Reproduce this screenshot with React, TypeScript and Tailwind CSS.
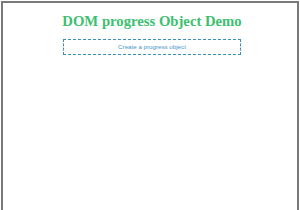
import React from 'react';

export default function App() {
  return (
    <div className="h-[210px] overflow-hidden">
      <div className="mx-px mt-px h-[220px] border-2 border-[#7a7a7a] bg-white">
        <div className="flex flex-col items-center pl-[4px] pt-[8px]">
          <h1
            className="text-[14.7px] font-bold leading-[20px] text-[#3cc070]"
            style={{ fontFamily: '"Liberation Serif", serif' }}
          >
            DOM progress Object Demo
          </h1>
          <button
            className="mt-[8px] flex h-[16px] w-[178px] items-center justify-center border border-dashed border-[#3b8fbf] text-[6.2px] text-[#4a96c8]"
            style={{ fontFamily: '"Liberation Sans", sans-serif' }}
          >
            Create a progress object
          </button>
        </div>
      </div>
    </div>
  );
}
